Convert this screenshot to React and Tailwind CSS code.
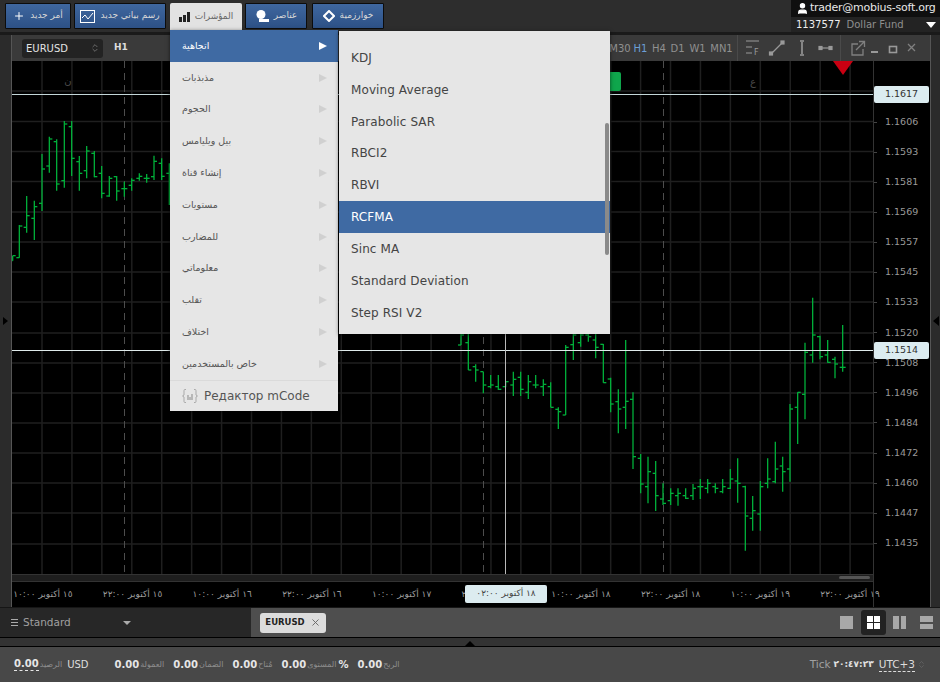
import { Plus, User, X, ChevronsUpDown } from 'lucide-react';

const leftBars = [
  [38, 497, 512, 512, 497], [58, 405, 503, 503, 408], [80, 318, 428, 412, 377], [103, 332, 450, 385, 350],
  [126, 192, 363, 340, 237], [148, 140, 248, 228, 147], [170, 148, 302, 155, 282], [193, 93, 293, 272, 102],
  [215, 93, 258, 110, 205], [238, 198, 302, 215, 250], [260, 168, 265, 242, 183], [283, 183, 262, 190, 260],
  [305, 228, 325, 250, 310], [328, 258, 320, 318, 265], [350, 258, 332, 260, 303], [373, 275, 320, 296, 296],
  [395, 265, 302, 286, 271], [418, 250, 272, 265, 259], [440, 252, 278, 265, 265], [462, 197, 270, 260, 214],
  [485, 205, 270, 220, 259], [508, 220, 345, 250, 250],
];
const midBars = [
  [3, 0, 45, 45, 15], [25, 0, 120, 38, 120], [47, 103, 155, 110, 120], [70, 125, 190, 125, 165],
  [92, 135, 175, 170, 165], [115, 135, 180, 170, 178], [137, 155, 172, 170, 155], [160, 125, 198, 165, 148],
  [182, 125, 198, 142, 178], [205, 135, 207, 187, 155], [227, 135, 175, 165, 165], [250, 148, 198, 170, 163],
  [272, 157, 232, 170, 232], [295, 232, 297, 238, 245], [317, 45, 255, 255, 52], [340, 0, 90, 44, 15],
  [362, 0, 50, 38, 15], [385, 0, 35, 15, 20], [407, 0, 85, 30, 52], [430, 42, 158, 43, 158],
  [452, 143, 247, 147, 222], [475, 178, 310, 215, 237], [497, 30, 297, 232, 214], [519, 187, 417, 208, 380],
  [542, 372, 490, 385, 462], [564, 380, 520, 470, 425], [587, 393, 543, 430, 497], [609, 460, 525, 507, 520],
  [632, 475, 525, 512, 490], [654, 475, 527, 497, 490], [677, 475, 507, 497, 505], [699, 462, 510, 497, 475],
];
const rightBars = [
  [1, 567, 627, 590, 590], [23, 567, 610, 595, 580], [46, 580, 610, 590, 595], [68, 567, 610, 605, 590],
  [91, 537, 597, 595, 567], [113, 505, 638, 573, 580], [136, 587, 782, 590, 678], [158, 618, 722, 685, 662],
  [181, 573, 722, 672, 590], [203, 505, 595, 580, 567], [226, 455, 580, 575, 537], [248, 500, 605, 528, 545],
  [270, 342, 575, 537, 357], [293, 307, 462, 352, 307], [315, 158, 388, 313, 187], [338, 23, 218, 195, 135],
  [360, 137, 208, 140, 200], [383, 150, 218, 195, 217], [405, 200, 265, 208, 222], [428, 105, 245, 232, 232],
];

const toPage = (list, ox, oy) =>
  list.map(([x, hi, lo, open, close]) => ({
    x: ox + x / 3,
    hi: oy + hi / 3,
    lo: oy + lo / 3,
    open: oy + open / 3,
    close: oy + close / 3,
  }));

const bars = [...toPage(leftBars, 0, 90), ...toPage(midBars, 460, 330), ...toPage(rightBars, 700, 290)];

const gridX = Array.from({ length: 28 }, (_, i) => 42 + i * 29.93);
const gridY = [91, 121.5, 151.5, 181.5, 212, 242, 272, 302, 333, 363, 393, 423, 453, 483, 513, 544];

const prices = ['1.1606', '1.1593', '1.1581', '1.1569', '1.1557', '1.1545', '1.1533', '1.1520', '1.1508', '1.1496', '1.1484', '1.1472', '1.1460', '1.1447', '1.1435'];

const times = [
  '١٥ أكتوبر ١٠:٠٠', '١٥ أكتوبر ٢٢:٠٠', '١٦ أكتوبر ١٠:٠٠', '١٦ أكتوبر ٢٢:٠٠', '١٧ أكتوبر ١٠:٠٠',
  '١٧ أكتوبر ٢٢:٠٠', '١٨ أكتوبر ١٠:٠٠', '١٨ أكتوبر ٢٢:٠٠', '١٩ أكتوبر ١٠:٠٠', '١٩ أكتوبر ٢٢:٠٠',
];

const menuItems = ['اتجاهية', 'مذبذبات', 'الحجوم', 'بيل ويليامس', 'إنشاء قناة', 'مستويات', 'للمضارب', 'معلوماتي', 'تقلب', 'اختلاف', 'خاص بالمستخدمين'];
const subItems = ['KDJ', 'Moving Average', 'Parabolic SAR', 'RBCI2', 'RBVI', 'RCFMA', 'Sinc MA', 'Standard Deviation', 'Step RSI V2'];

function TopButton({ icon, label, className }) {
  return (
    <button className={`${className} h-[26px] flex items-center justify-center gap-[5px] rounded-[1px] border border-[#0c0c0c] bg-gradient-to-b from-[#3f679f] to-[#2d5186] text-[9px] text-[#d8d8d8]`}>
      {icon}
      <span>{label}</span>
    </button>
  );
}

function TopBar() {
  return (
    <div className="h-[32px] shrink-0 flex items-start bg-[#2d2d2d]">
      <div className="flex items-start pl-[5px] pt-[3px]">
        <TopButton className="w-[66px]" label="أمر جديد" icon={<Plus size={12} strokeWidth={2} className="text-white" />} />
        <TopButton
          className="w-[92px] ml-[3px]"
          label="رسم بياني جديد"
          icon={
            <svg width="15" height="13" viewBox="0 0 15 13" fill="none" stroke="#fff">
              <rect x="0.5" y="0.5" width="14" height="12" />
              <path d="M2 8l3-3 3 4 5-6" />
            </svg>
          }
        />
        <div className="ml-[4px] w-[72px] h-[27px] flex items-center justify-center gap-[5px] bg-[#e2e2e2] text-[9px] text-[#666] rounded-t-[2px]">
          <svg width="11" height="10" viewBox="0 0 11 10" fill="#222">
            <rect x="0" y="5" width="3" height="5" />
            <rect x="4" y="3" width="3" height="7" />
            <rect x="8" y="0" width="3" height="10" />
          </svg>
          <span>المؤشرات</span>
        </div>
        <TopButton
          className="w-[62px] ml-[3px]"
          label="عناصر"
          icon={
            <svg width="14" height="12" viewBox="0 0 14 12" fill="#fff">
              <circle cx="6" cy="4.5" r="4.5" />
              <path d="M4 9h10v3H4z" />
            </svg>
          }
        />
        <TopButton
          className="w-[72px] ml-[5px]"
          label="خوارزمية"
          icon={
            <svg width="12" height="12" viewBox="0 0 12 12" fill="none" stroke="#fff" strokeWidth="2">
              <path d="M6 1l5 5-5 5-5-5z" />
            </svg>
          }
        />
      </div>
      <div className="ml-auto w-[149px] h-[32px] flex flex-col">
        <div className="h-[17px] bg-[#0f0f0f] flex items-center pl-[5px] gap-px text-[#e8e8e8] whitespace-nowrap">
          <User size={13} fill="#fff" className="text-white shrink-0" />
          <span className="text-[11px] tracking-[-0.25px]">trader@mobius-soft.org</span>
        </div>
        <div className="h-[15px] bg-[#232323] flex items-center pl-[5px] gap-[6px] whitespace-nowrap">
          <span className="text-[10px] text-[#eee]">1137577</span>
          <span className="text-[#8f8f8f] text-[10px]">Dollar Fund</span>
          <div className="ml-auto mr-[4px] w-0 h-0 border-x-[5px] border-x-transparent border-t-[6px] border-t-white" />
        </div>
      </div>
    </div>
  );
}

function ChartToolbar() {
  return (
    <div className="h-[26px] shrink-0 flex items-center bg-[#3a3a3a]">
      <div className="ml-[10px] w-[81px] h-[19px] flex items-center justify-between pl-[4px] pr-[3px] rounded-[3px] bg-[#232323] text-[10px] text-[#e4e4e4]">
        <span>EURUSD</span>
        <ChevronsUpDown size={10} className="text-[#777]" />
      </div>
      <span className="ml-[11px] text-[9px] font-semibold text-[#ddd]">H1</span>
      <div className="ml-auto flex items-center text-[#909090] text-[10px]">
        <span className="w-[22px] text-center">M30</span>
        <span className="w-[19px] text-center text-[#6c9fd6]">H1</span>
        <span className="w-[18px] text-center">H4</span>
        <span className="w-[19px] text-center">D1</span>
        <span className="w-[21px] text-center">W1</span>
        <span className="w-[27px] text-center">MN1</span>
      </div>
      <div className="ml-[2px] w-px h-[26px] bg-[#4a4a4a]" />
      <svg width="102" height="26" viewBox="0 0 102 26" fill="none" stroke="#999" strokeWidth="1.2" className="shrink-0">
        <path d="M8 6h13M8 12h6M8 18h6" />
        <text x="16" y="20" fontSize="8" fill="#999" stroke="none">F</text>
        <path d="M33 19L44 8" />
        <rect x="31.5" y="17" width="3" height="3" fill="#999" />
        <rect x="43" y="6" width="3" height="3" fill="#999" />
        <path d="M64 7v12M62 6h4M62 20h4" strokeWidth="1.6" />
        <path d="M82 13h12" />
        <rect x="81" y="11.5" width="3" height="3" fill="#999" />
        <rect x="91" y="11.5" width="3" height="3" fill="#999" />
      </svg>
      <div className="w-px h-[26px] bg-[#4a4a4a]" />
      <svg width="80" height="26" viewBox="0 0 80 26" fill="none" stroke="#808080" strokeWidth="1.3" className="shrink-0 mr-[9px]">
        <path d="M17 9H11v11h11v-6M15 15l8-8M18 6.5h5.5V12" />
        <path d="M30 17h7" strokeWidth="2" stroke="#999" />
        <rect x="48.5" y="11.5" width="7" height="6" strokeWidth="1.6" stroke="#999" />
        <path d="M67 9l7 7M74 9l-7 7" />
      </svg>
    </div>
  );
}

function ChartPlot() {
  return (
    <div className="relative h-[513px] shrink-0 bg-black">
      <svg viewBox="12 61 861 513" width="861" height="513" className="block">
        {gridX.map((x) => (
          <line key={x} x1={x} x2={x} y1="61" y2="574" stroke="#1f1f1f" strokeWidth="1.5" />
        ))}
        {gridY.map((y) => (
          <line key={y} x1="12" x2="873" y1={y} y2={y} stroke="#1f1f1f" strokeWidth="1.5" />
        ))}
        {[124.5, 483.5, 663.5].map((x) => (
          <line key={x} x1={x} x2={x} y1="61" y2="574" stroke="#4d4d4d" strokeWidth="1" strokeDasharray="7 5" />
        ))}
        <g stroke="#00b03a" strokeWidth="1.3">
          {bars.map((b) => (
            <g key={b.x}>
              <line x1={b.x} x2={b.x} y1={b.hi} y2={b.lo} />
              <line x1={b.x - 3} x2={b.x} y1={b.open} y2={b.open} />
              <line x1={b.x} x2={b.x + 3} y1={b.close} y2={b.close} />
            </g>
          ))}
        </g>
        <line x1="12" x2="873" y1="94.5" y2="94.5" stroke="#c3d6d8" strokeWidth="1" />
        <line x1="12" x2="873" y1="350.5" y2="350.5" stroke="#dfeaea" strokeWidth="1" />
        <line x1="505.5" x2="505.5" y1="61" y2="574" stroke="#b9b9b9" strokeWidth="1" />
        <path d="M833 61h20l-10 14z" fill="#c90012" />
        <text x="68" y="84" fontSize="10" fill="#4a4a4a" textAnchor="middle">ن</text>
        <text x="753" y="85" fontSize="10" fill="#4a4a4a" textAnchor="middle">ع</text>
      </svg>
      <div className="absolute left-[578px] top-[11px] w-[31px] h-[19px] rounded-[2px] bg-[#0fa64c]" />
    </div>
  );
}

function Chart() {
  return (
    <div className="h-[573px] shrink-0 flex border-b border-[#161616]">
      <div className="w-[12px] shrink-0 flex items-center bg-[#2b2b2b] border-r border-[#555]">
        <div className="w-0 h-0 border-y-[4px] border-y-transparent border-l-[5px] border-l-black ml-[3px]" />
      </div>
      <div className="w-[918px] flex flex-col min-w-0">
        <ChartToolbar />
        <div className="flex-1 min-h-0 flex">
          <div className="relative z-10 w-[861px] flex flex-col">
            <ChartPlot />
            <div className="relative h-[8px] shrink-0 bg-[#1e1e1e] border-y border-[#333]">
              <div className="absolute right-[3px] top-[1px] w-[31px] h-[3px] rounded-full bg-[#555]" />
            </div>
            <div className="flex-1 flex items-center bg-black text-[9px] text-[#9c9c9c]">
              {times.map((t, i) => (
                <div key={t} dir="rtl" className={`w-[89.7px] shrink-0 text-center whitespace-nowrap ${i === 0 ? '-ml-[14px]' : ''}`}>
                  {t}
                </div>
              ))}
            </div>
          </div>
          <div className="w-[57px] shrink-0 flex flex-col pt-[46px] bg-black border-l border-[#333] text-[9.5px] text-[#9a9a9a]">
            {prices.map((p) => (
              <div key={p} className="h-[30.1px] flex items-center">
                <span className="w-[3px] h-px bg-[#444] mr-[8px]" />
                {p}
              </div>
            ))}
          </div>
        </div>
      </div>
      <div className="w-[10px] shrink-0 flex items-center justify-end bg-[#2b2b2b] border-l border-[#555]">
        <div className="w-0 h-0 border-y-[5px] border-y-transparent border-r-[6px] border-r-black mr-[1px]" />
      </div>
    </div>
  );
}

function BottomTabs() {
  return (
    <div className="h-[30px] shrink-0 flex border-b border-black">
      <div className="w-[251px] flex items-center bg-[#272727] text-[10.5px] text-[#a0a0a0]">
        <span className="ml-[11px] w-[7px] h-[7px] border-y border-[#aaa] flex items-center">
          <span className="w-full h-px bg-[#aaa]" />
        </span>
        <span className="ml-[5px]">Standard</span>
        <div className="ml-[52px] w-0 h-0 border-x-[4px] border-x-transparent border-t-[4px] border-t-[#aaa]" />
      </div>
      <div className="flex-1 flex items-center bg-[#4e4e4e]">
        <div className="ml-[9px] w-[66px] h-[20px] flex items-center justify-center gap-[5px] rounded-[3px] bg-[#dcdcdc] text-[8.5px] font-bold text-[#222]">
          EURUSD
          <X size={11} className="text-[#666]" />
        </div>
        <div className="ml-auto mr-[7px] flex items-center">
          <div className="w-[13px] h-[13px] bg-[#a8a8a8]" />
          <div className="ml-[8px] w-[25px] h-[25px] flex items-center justify-center rounded-[3px] bg-[#222]">
            <div className="grid grid-cols-2 gap-px w-[13px] h-[13px]">
              <div className="bg-white" />
              <div className="bg-white" />
              <div className="bg-white" />
              <div className="bg-white" />
            </div>
          </div>
          <div className="ml-[7px] w-[13px] h-[13px] grid grid-cols-2 gap-[2px]">
            <div className="bg-[#a8a8a8]" />
            <div className="bg-[#a8a8a8]" />
          </div>
          <div className="ml-[14px] w-[13px] h-[13px] grid grid-rows-2 gap-[2px]">
            <div className="bg-[#a8a8a8]" />
            <div className="bg-[#a8a8a8]" />
          </div>
        </div>
      </div>
    </div>
  );
}

function Stat({ label, suffix }) {
  return (
    <div className="flex items-center">
      <span className="font-bold text-[10px] text-[#e6e6e6]">0.00</span>
      <span className="ml-px text-[8px] text-[#8e8e8e]">{label}</span>
      {suffix && <span className="ml-[2px] font-bold text-[10px] text-[#e6e6e6]">{suffix}</span>}
    </div>
  );
}

function StatusBar() {
  return (
    <div className="flex-1 flex items-center pl-[14px] pr-[14px] bg-[#484848]">
      <span className="font-bold text-[10px] text-[#e6e6e6] border-b border-dashed border-[#e6e6e6] leading-[12px]">0.00</span>
      <span className="ml-px text-[8px] text-[#8e8e8e]">الرصيد</span>
      <span className="ml-[5px] text-[10px] text-[#ddd]">USD</span>
      <div className="ml-[26px] flex gap-[9px]">
        <Stat label="العمولة" />
        <Stat label="الضمان" />
        <Stat label="مُتاح" />
        <Stat label="المستوى" suffix="%" />
        <Stat label="الربح" />
      </div>
      <div className="ml-auto flex items-center text-[#a0a0a0]">
        <span className="text-[10.5px]">Tick</span>
        <span className="ml-[3px] text-[9px] font-bold text-[#e0e0e0]">٢٠:٤٧:٢٣</span>
        <span className="ml-[5px] text-[10.5px] text-[#ddd] border-b border-dashed border-[#ddd] leading-[13px]">UTC+3</span>
        <ChevronsUpDown size={9} className="ml-[2px] text-[#666]" />
      </div>
    </div>
  );
}

function IndicatorMenu() {
  return (
    <div className="absolute z-20 left-[170px] top-[30px] flex items-start">
      <div className="w-[168px] bg-[#e6e6e6] shadow-[0_1px_4px_rgba(0,0,0,0.6)] text-[9.5px] text-[#555]">
        {menuItems.map((item, i) => (
          <div key={item} className={`h-[31.8px] flex items-center justify-between pl-[12px] pr-[11px] ${i === 0 ? 'bg-[#3f6aa3] text-white' : ''}`}>
            <span>{item}</span>
            <div className={`w-0 h-0 border-y-[4px] border-y-transparent border-l-[8px] ${i === 0 ? 'border-l-white' : 'border-l-[#d0d0d0]'}`} />
          </div>
        ))}
        <div className="h-[31px] flex items-center gap-[6px] pl-[12px] border-t border-[#dadada] text-[12px] text-[#555]">
          <svg width="16" height="16" viewBox="0 0 16 16" fill="none" stroke="#aaa" strokeWidth="1" className="shrink-0">
            <path d="M4 1.5H3a1 1 0 0 0-1 1V7L.5 8 2 9v4.5a1 1 0 0 0 1 1h1M12 1.5h1a1 1 0 0 1 1 1V7l1.5 1L14 9v4.5a1 1 0 0 1-1 1h-1" />
            <path d="M6 7v5M8 9v3M10 6v6" strokeWidth="1.2" stroke="#999" />
          </svg>
          Редактор mCode
        </div>
      </div>
      <div className="relative mt-px ml-px w-[271px] h-[303px] overflow-hidden bg-[#e6e6e6] shadow-[0_1px_4px_rgba(0,0,0,0.6)] text-[12px] tracking-[0.1px] text-[#444]">
        <div className="pt-[11px]">
          {subItems.map((item) => (
            <div key={item} className={`h-[31.85px] flex items-center pl-[12px] ${item === 'RCFMA' ? 'bg-[#3f6aa3] text-white' : ''}`}>
              {item}
            </div>
          ))}
        </div>
        <div className="absolute right-[1px] top-[92px] w-[4px] h-[132px] rounded-full bg-[#8a8a8a]" />
      </div>
    </div>
  );
}

export default function App() {
  return (
    <div className="relative w-[940px] h-[682px] flex flex-col overflow-hidden bg-[#2d2d2d] font-['DejaVu_Sans',sans-serif]">
      <TopBar />
      <div className="h-[3px] shrink-0 bg-[#1a1a1a]" />
      <Chart />
      <BottomTabs />
      <div className="h-[9px] shrink-0 relative bg-[#333] border-b border-black">
        <div className="absolute left-[465px] bottom-0 w-0 h-0 border-x-[5px] border-x-transparent border-b-[5px] border-b-black" />
      </div>
      <StatusBar />
      <IndicatorMenu />
      <div className="absolute z-20 left-[874px] top-[86px] w-[55px] h-[17px] flex items-center justify-center rounded-[2px] bg-[#dcecf0] text-[9.5px] text-[#333]">1.1617</div>
      <div className="absolute z-20 left-[874px] top-[342px] w-[55px] h-[17px] flex items-center justify-center rounded-[2px] bg-[#dcecf0] text-[9.5px] text-[#333]">1.1514</div>
      <div dir="rtl" className="absolute z-20 left-[465px] top-[585px] w-[82px] h-[18px] flex items-center justify-center rounded-[2px] bg-[#dcecf0] text-[9px] text-[#444]">١٨ أكتوبر ٠٢:٠٠</div>
    </div>
  );
}
